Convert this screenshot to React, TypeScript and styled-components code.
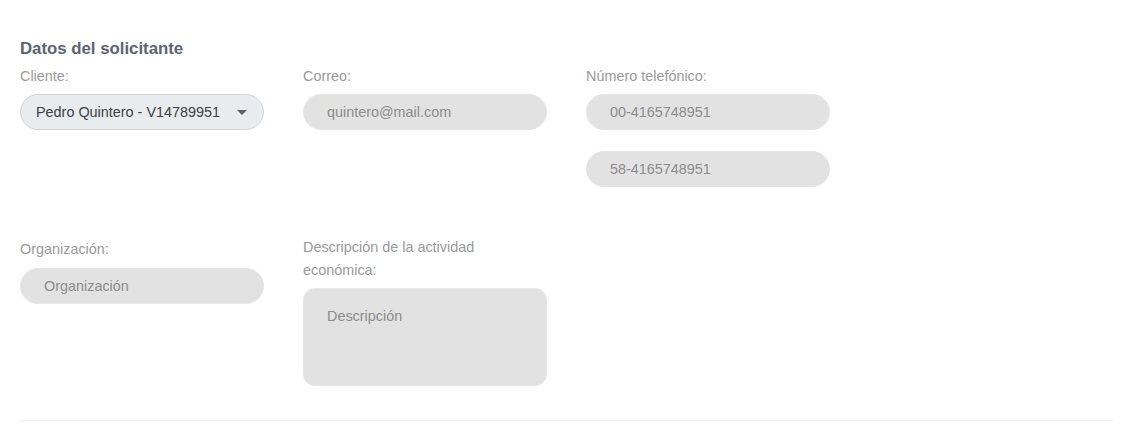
import React from "react";
import styled, { createGlobalStyle } from "styled-components";

const Global = createGlobalStyle`
  html, body { margin: 0; padding: 0; background: #ffffff; }
  body { font-family: "Liberation Sans", Arial, sans-serif; }
  * { box-sizing: border-box; }
`;

const Page = styled.div`
  padding: 39px 24px 0 20px;
`;

const Title = styled.h2`
  margin: 0;
  font-size: 16.8px;
  line-height: 20px;
  font-weight: 700;
  color: #5b6473;
`;

const Row = styled.div<{ $top: number }>`
  display: grid;
  grid-template-columns: repeat(4, 244px);
  column-gap: 39px;
  align-items: start;
  margin-top: ${(p) => p.$top}px;
`;

const Field = styled.div<{ $offset?: number }>`
  display: flex;
  flex-direction: column;
  gap: 21px;
  padding-top: ${(p) => p.$offset ?? 0}px;
`;

const Group = styled.div`
  display: flex;
  flex-direction: column;
`;

const Label = styled.label<{ $space?: number }>`
  font-size: 14.4px;
  line-height: 23px;
  color: #9a9a9a;
  margin-bottom: ${(p) => p.$space ?? 6}px;
`;

const Input = styled.div`
  height: 36px;
  border-radius: 18px;
  background: #e2e2e2;
  border: 1px solid #e6e6e6;
  padding: 0 23px;
  display: flex;
  align-items: center;
  font-size: 14.4px;
  color: #8c8c8c;
`;

const Select = styled.div`
  height: 36px;
  border-radius: 18px;
  background: #e9ecef;
  border: 1px solid #cfd4d9;
  padding: 0 16px 0 15px;
  display: flex;
  align-items: center;
  justify-content: space-between;
  font-size: 14.4px;
  color: #3c4046;
`;

const Caret = styled.span`
  width: 0;
  height: 0;
  border-left: 5px solid transparent;
  border-right: 5px solid transparent;
  border-top: 5px solid #5c6168;
  margin-top: 1px;
`;

const TextArea = styled.div`
  height: 98px;
  border-radius: 12px;
  background: #e2e2e2;
  border: 1px solid #e6e6e6;
  padding: 18px 23px;
  font-size: 14.4px;
  line-height: 18px;
  color: #8c8c8c;
`;

const Divider = styled.hr`
  margin: 34px 0 0;
  border: 0;
  border-top: 1px solid #eeeeee;
`;

export default function App() {
  return (
    <>
      <Global />
      <Page>
        <Title>Datos del solicitante</Title>
        <Row $top={6}>
          <Group>
            <Label>Cliente:</Label>
            <Select>
              <span>Pedro Quintero - V14789951</span>
              <Caret />
            </Select>
          </Group>
          <Group>
            <Label>Correo:</Label>
            <Input>quintero@mail.com</Input>
          </Group>
          <Group>
            <Label>Número telefónico:</Label>
            <Field>
              <Input>00-4165748951</Input>
              <Input>58-4165748951</Input>
            </Field>
          </Group>
        </Row>
        <Row $top={49}>
          <Field $offset={2}>
            <Group>
              <Label $space={7}>Organización:</Label>
              <Input>Organización</Input>
            </Group>
          </Field>
          <Group>
            <Label>Descripción de la actividad económica:</Label>
            <TextArea>Descripción</TextArea>
          </Group>
        </Row>
        <Divider />
      </Page>
    </>
  );
}
